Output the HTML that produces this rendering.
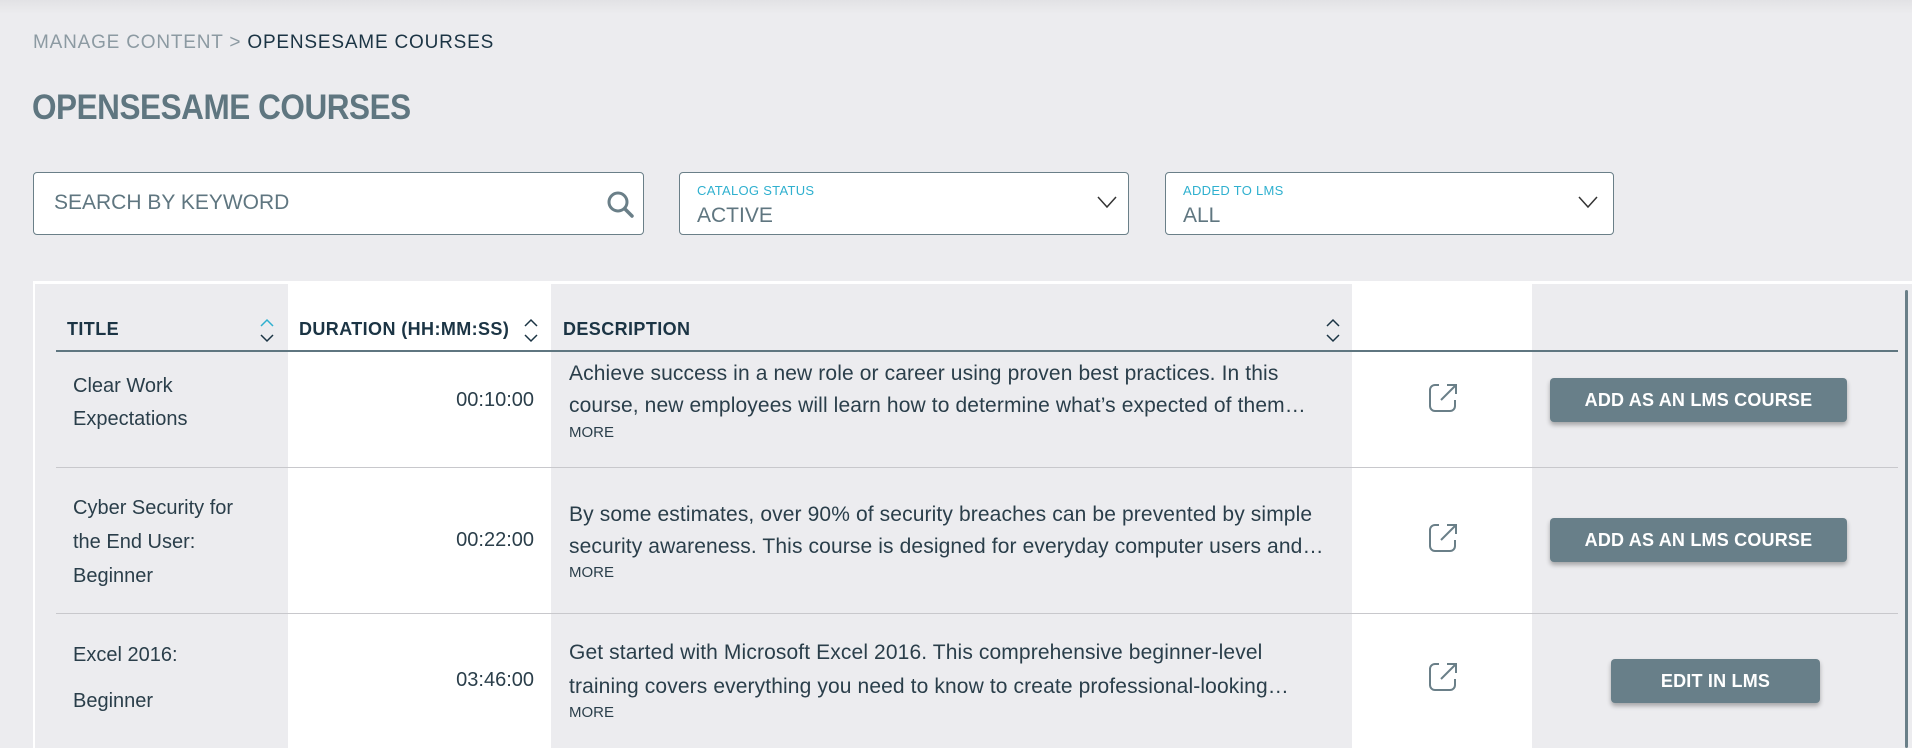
<!DOCTYPE html>
<html><head><meta charset="utf-8"><style>
*{margin:0;padding:0;box-sizing:border-box}
body{width:1912px;height:748px;overflow:hidden;background:#ececef;font-family:"Liberation Sans",sans-serif;color:#1f3847;position:relative}
.a{position:absolute;white-space:nowrap}
.top{position:absolute;left:0;top:0;width:1912px;height:14px;background:linear-gradient(#e2e2e5,#ececef)}
.box{position:absolute;background:#fff;border:1px solid #6a7f88;border-radius:4px;height:63px;top:172px}
.lbl{font-size:13px;color:#2fb0cf;letter-spacing:.3px}
.val{font-size:21px;color:#5f7680}
.col{position:absolute;top:284px;height:464px}
.hd{font-size:18px;font-weight:bold;color:#1b3444;top:319px;letter-spacing:.4px}
.t{font-size:20px;color:#2a3e4a}
.d{font-size:21px;color:#2a3e4a;letter-spacing:.12px}
.more{font-size:15px;color:#2a3e4a}
.btn{position:absolute;background:#687f89;color:#fff;font-size:18px;border-radius:4px;box-shadow:0 3px 5px rgba(0,0,0,.3);text-align:center;font-weight:bold;letter-spacing:.2px}
.sep{position:absolute;left:56px;width:1842px;height:1px;background:#c8c8cc}
</style></head><body>
<div class="top"></div>
<div class="a" style="left:33px;top:32px;font-size:19px;color:#8c9aa2;letter-spacing:.8px">MANAGE CONTENT &gt; <span style="color:#1b3444">OPENSESAME COURSES</span></div>
<div class="a" style="left:32px;top:88px;font-size:35px;font-weight:bold;color:#5f7680;letter-spacing:-.5px;transform:scaleX(.9);transform-origin:0 0">OPENSESAME COURSES</div>

<div class="box" style="left:33px;width:611px">
<div class="a val" style="left:20px;top:18px">SEARCH BY KEYWORD</div>
<svg class="a" style="left:572px;top:17px" width="30" height="30" viewBox="0 0 30 30"><circle cx="12" cy="12" r="9" fill="none" stroke="#6a7f88" stroke-width="3"/><path d="M19 19l7 7" stroke="#6a7f88" stroke-width="3.5" stroke-linecap="round"/></svg>
</div>
<div class="box" style="left:679px;width:450px">
<div class="a lbl" style="left:17px;top:10px">CATALOG STATUS</div>
<div class="a val" style="left:17px;top:31px">ACTIVE</div>
<svg class="a" style="left:417px;top:22px" width="20" height="14"><path d="M1 2l9 10 9-10" fill="none" stroke="#333" stroke-width="1.5"/></svg>
</div>
<div class="box" style="left:1165px;width:449px">
<div class="a lbl" style="left:17px;top:10px">ADDED TO LMS</div>
<div class="a val" style="left:17px;top:31px">ALL</div>
<svg class="a" style="left:412px;top:22px" width="20" height="14"><path d="M1 2l9 10 9-10" fill="none" stroke="#333" stroke-width="1.5"/></svg>
</div>

<div style="position:absolute;left:33px;top:281px;width:1879px;height:3px;background:#fff"></div>
<div style="position:absolute;left:33px;top:281px;width:2px;height:467px;background:#fff"></div>
<div class="col" style="left:288px;width:263px;background:#fff"></div>
<div class="col" style="left:1352px;width:180px;background:#fff"></div>
<div style="position:absolute;left:1905px;top:290px;width:3px;height:458px;background:#6a7f88;border-radius:2px"></div>

<div class="a hd" style="left:67px">TITLE</div>
<div class="a hd" style="left:299px">DURATION (HH:MM:SS)</div>
<div class="a hd" style="left:563px">DESCRIPTION</div>
<svg class="a" style="left:258px;top:316px" width="18" height="30"><path d="M3 10l6-6 6 6" fill="none" stroke="#2fb0cf" stroke-width="1.5"/><path d="M3 19l6 6 6-6" fill="none" stroke="#1b3444" stroke-width="1.5"/></svg>
<svg class="a" style="left:522px;top:316px" width="18" height="30"><path d="M3 10l6-6 6 6" fill="none" stroke="#1b3444" stroke-width="1.5"/><path d="M3 19l6 6 6-6" fill="none" stroke="#1b3444" stroke-width="1.5"/></svg>
<svg class="a" style="left:1324px;top:316px" width="18" height="30"><path d="M3 10l6-6 6 6" fill="none" stroke="#1b3444" stroke-width="1.5"/><path d="M3 19l6 6 6-6" fill="none" stroke="#1b3444" stroke-width="1.5"/></svg>
<div style="position:absolute;left:56px;top:350px;width:1842px;height:2px;background:#5f7680"></div>

<!-- row 1 -->
<div class="a t" style="left:73px;top:370px;line-height:33px">Clear Work<br>Expectations</div>
<div class="a t" style="left:444px;top:389px;width:90px;text-align:right">00:10:00</div>
<div class="a d" style="left:569px;top:358px;line-height:32px">Achieve success in a new role or career using proven best practices. In this<br>course, new employees will learn how to determine what’s expected of them…</div>
<div class="a more" style="left:569px;top:424px">MORE</div>
<svg class="a" style="left:1428px;top:383px" width="30" height="30" viewBox="0 0 30 30"><path d="M11 2H7a5 5 0 0 0-5 5v16a5 5 0 0 0 5 5h15a5 5 0 0 0 5-5v-6" fill="none" stroke="#6a7f88" stroke-width="2"/><path d="M13 17L28 2M19 2h9v9" fill="none" stroke="#6a7f88" stroke-width="2"/></svg>
<div class="btn" style="left:1550px;top:378px;width:297px;height:44px;line-height:44px">ADD AS AN LMS COURSE</div>
<div class="sep" style="top:467px"></div>

<!-- row 2 -->
<div class="a t" style="left:73px;top:491px;line-height:34px">Cyber Security for<br>the End User:<br>Beginner</div>
<div class="a t" style="left:444px;top:529px;width:90px;text-align:right">00:22:00</div>
<div class="a d" style="left:569px;top:499px;line-height:32px">By some estimates, over 90% of security breaches can be prevented by simple<br>security awareness. This course is designed for everyday computer users and…</div>
<div class="a more" style="left:569px;top:564px">MORE</div>
<svg class="a" style="left:1428px;top:523px" width="30" height="30" viewBox="0 0 30 30"><path d="M11 2H7a5 5 0 0 0-5 5v16a5 5 0 0 0 5 5h15a5 5 0 0 0 5-5v-6" fill="none" stroke="#6a7f88" stroke-width="2"/><path d="M13 17L28 2M19 2h9v9" fill="none" stroke="#6a7f88" stroke-width="2"/></svg>
<div class="btn" style="left:1550px;top:518px;width:297px;height:44px;line-height:44px">ADD AS AN LMS COURSE</div>
<div class="sep" style="top:613px"></div>

<!-- row 3 -->
<div class="a t" style="left:73px;top:632px;line-height:46px">Excel 2016:<br>Beginner</div>
<div class="a t" style="left:444px;top:669px;width:90px;text-align:right">03:46:00</div>
<div class="a d" style="left:569px;top:636px;line-height:34px">Get started with Microsoft Excel 2016. This comprehensive beginner-level<br>training covers everything you need to know to create professional-looking…</div>
<div class="a more" style="left:569px;top:704px">MORE</div>
<svg class="a" style="left:1428px;top:662px" width="30" height="30" viewBox="0 0 30 30"><path d="M11 2H7a5 5 0 0 0-5 5v16a5 5 0 0 0 5 5h15a5 5 0 0 0 5-5v-6" fill="none" stroke="#6a7f88" stroke-width="2"/><path d="M13 17L28 2M19 2h9v9" fill="none" stroke="#6a7f88" stroke-width="2"/></svg>
<div class="btn" style="left:1611px;top:659px;width:209px;height:44px;line-height:44px">EDIT IN LMS</div>
</body></html>
